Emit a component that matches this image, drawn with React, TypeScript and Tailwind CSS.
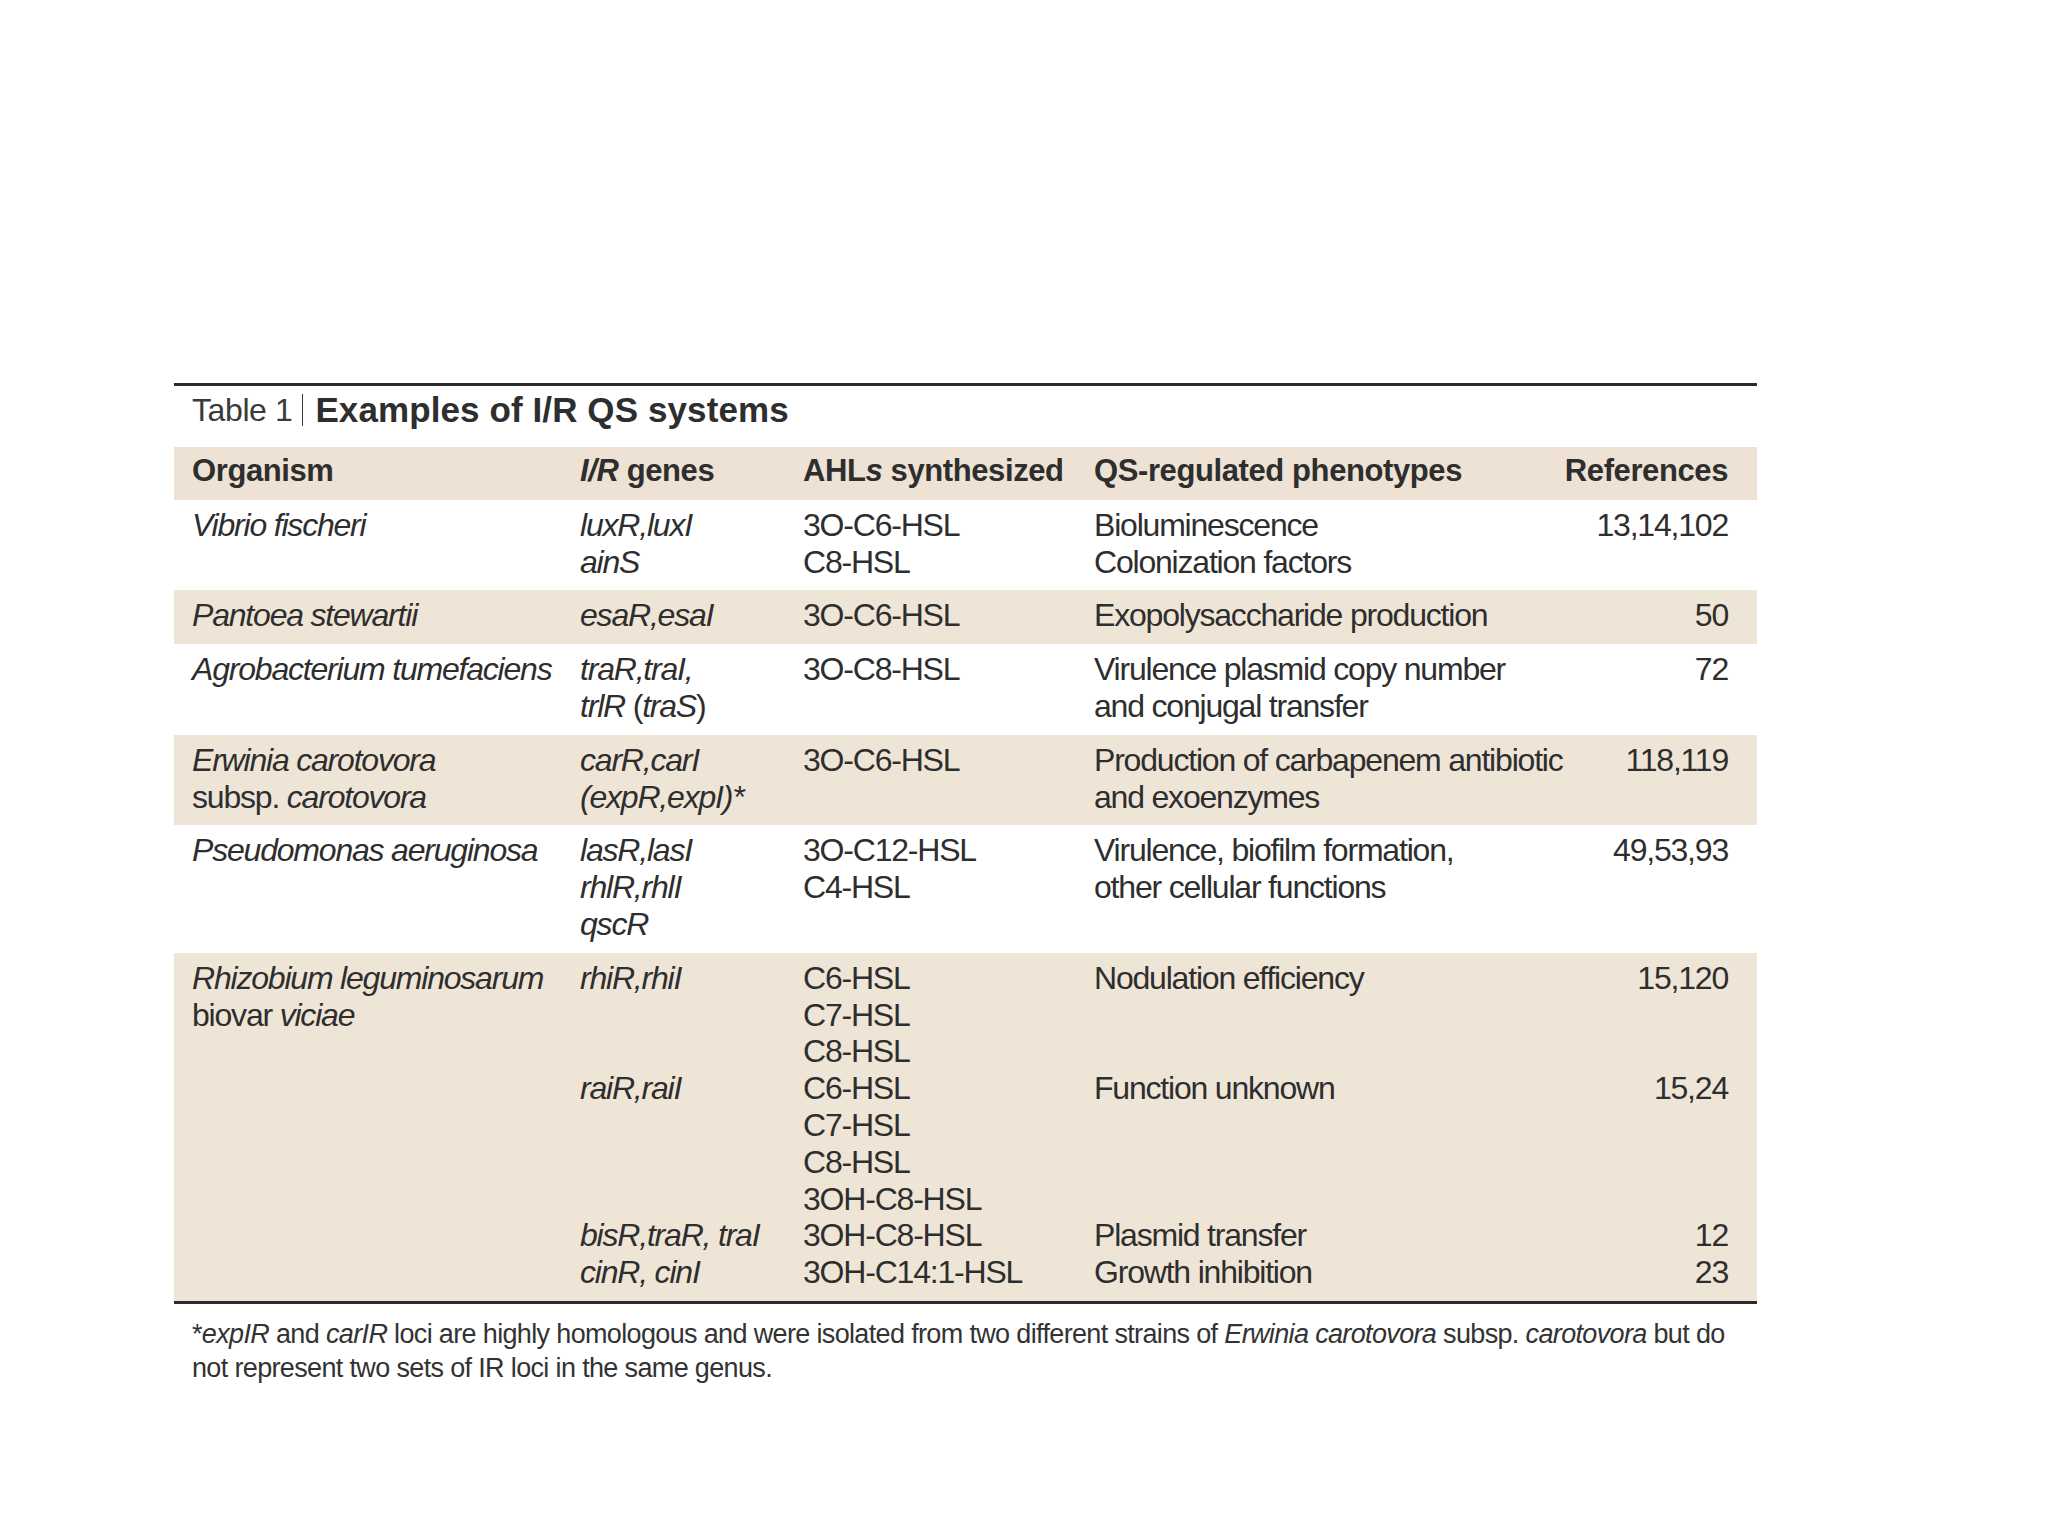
import type { ReactNode } from "react";

type Row = { shaded: boolean; cells: ReactNode[][] };

const rows: Row[] = [
  {
    shaded: false,
    cells: [
      [<i>Vibrio fischeri</i>],
      [<i>luxR,luxI</i>, <i>ainS</i>],
      ["3O-C6-HSL", "C8-HSL"],
      ["Bioluminescence", "Colonization factors"],
      ["13,14,102"],
    ],
  },
  {
    shaded: true,
    cells: [
      [<i>Pantoea stewartii</i>],
      [<i>esaR,esaI</i>],
      ["3O-C6-HSL"],
      ["Exopolysaccharide production"],
      ["50"],
    ],
  },
  {
    shaded: false,
    cells: [
      [<i>Agrobacterium tumefaciens</i>],
      [<i>traR,traI,</i>, <><i>trlR</i> (<i>traS</i>)</>],
      ["3O-C8-HSL"],
      ["Virulence plasmid copy number", "and conjugal transfer"],
      ["72"],
    ],
  },
  {
    shaded: true,
    cells: [
      [<i>Erwinia carotovora</i>, <>subsp. <i>carotovora</i></>],
      [<i>carR,carI</i>, <i>(expR,expI)*</i>],
      ["3O-C6-HSL"],
      ["Production of carbapenem antibiotic", "and exoenzymes"],
      ["118,119"],
    ],
  },
  {
    shaded: false,
    cells: [
      [<i>Pseudomonas aeruginosa</i>],
      [<i>lasR,lasI</i>, <i>rhlR,rhlI</i>, <i>qscR</i>],
      ["3O-C12-HSL", "C4-HSL"],
      ["Virulence, biofilm formation,", "other cellular functions"],
      ["49,53,93"],
    ],
  },
  {
    shaded: true,
    cells: [
      [<i>Rhizobium leguminosarum</i>, <>biovar <i>viciae</i></>],
      [<i>rhiR,rhiI</i>, "", "", <i>raiR,raiI</i>, "", "", "", <i>bisR,traR, traI</i>, <i>cinR, cinI</i>],
      ["C6-HSL", "C7-HSL", "C8-HSL", "C6-HSL", "C7-HSL", "C8-HSL", "3OH-C8-HSL", "3OH-C8-HSL", "3OH-C14:1-HSL"],
      ["Nodulation efficiency", "", "", "Function unknown", "", "", "", "Plasmid transfer", "Growth inhibition"],
      ["15,120", "", "", "15,24", "", "", "", "12", "23"],
    ],
  },
];

const grid = "grid grid-cols-[388px_223px_291px_minmax(0,1fr)_180px] pl-[18px] pr-[29px]";

function Cell({ lines, right }: { lines: ReactNode[]; right?: boolean }) {
  return (
    <div className={right ? "text-right" : ""}>
      {lines.map((l, i) => (
        <div key={i} className="whitespace-nowrap">
          {l === "" ? "\u00a0" : l}
        </div>
      ))}
    </div>
  );
}

export default function App() {
  return (
    <div className="min-h-screen bg-white font-['Liberation_Sans',Arial,sans-serif] text-[#2e2e2e]">
      <div className="pt-[383px] pl-[174px]">
        <div className="w-[1583px]">
          <div className="border-t-[3px] border-[#2b2b2b]" />

          {/* Title */}
          <div className="flex items-center pl-[18px] pt-[4px] mb-[17px] leading-[40px]">
            <span className="text-[32px] tracking-[-0.4px] text-[#3a3a3a]">Table 1</span>
            <span className="ml-[10px] mr-[12px] h-[32px] w-px bg-[#3a3a3a]" />
            <span className="text-[35px] font-bold tracking-[0.1px]">Examples of I/R QS systems</span>
          </div>

          {/* Header */}
          <div className={`${grid} bg-[#ede2d3] pt-[6px] pb-[10px] text-[31px] font-bold leading-[36.8px] tracking-[-0.4px]`}>
            <div>Organism</div>
            <div>
              <i>I/R</i> genes
            </div>
            <div className="whitespace-nowrap">
              AHL<i>s</i> synthesized
            </div>
            <div>QS-regulated phenotypes</div>
            <div className="text-right whitespace-nowrap">References</div>
          </div>

          {/* Body */}
          <div className="text-[32px] leading-[36.8px] tracking-[-1.2px]">
            {rows.map((r, i) => (
              <div key={i} className={`${grid} pt-[7px] pb-[10px] ${r.shaded ? "bg-[#efe5d7]" : "bg-white"}`}>
                {r.cells.map((c, j) => (
                  <Cell key={j} lines={c} right={j === 4} />
                ))}
              </div>
            ))}
          </div>

          <div className="border-t-[3px] border-[#2b2b2b]" />

          {/* Footnote */}
          <p className="pl-[18px] pt-[13px] text-[27px] leading-[34px] tracking-[-0.65px] text-[#333] whitespace-nowrap">
            *<i>expIR</i> and <i>carIR</i> loci are highly homologous and were isolated from two different strains of{" "}
            <i>Erwinia carotovora</i> subsp. <i>carotovora</i> but do
            <br />
            not represent two sets of IR loci in the same genus.
          </p>
        </div>
      </div>
    </div>
  );
}
